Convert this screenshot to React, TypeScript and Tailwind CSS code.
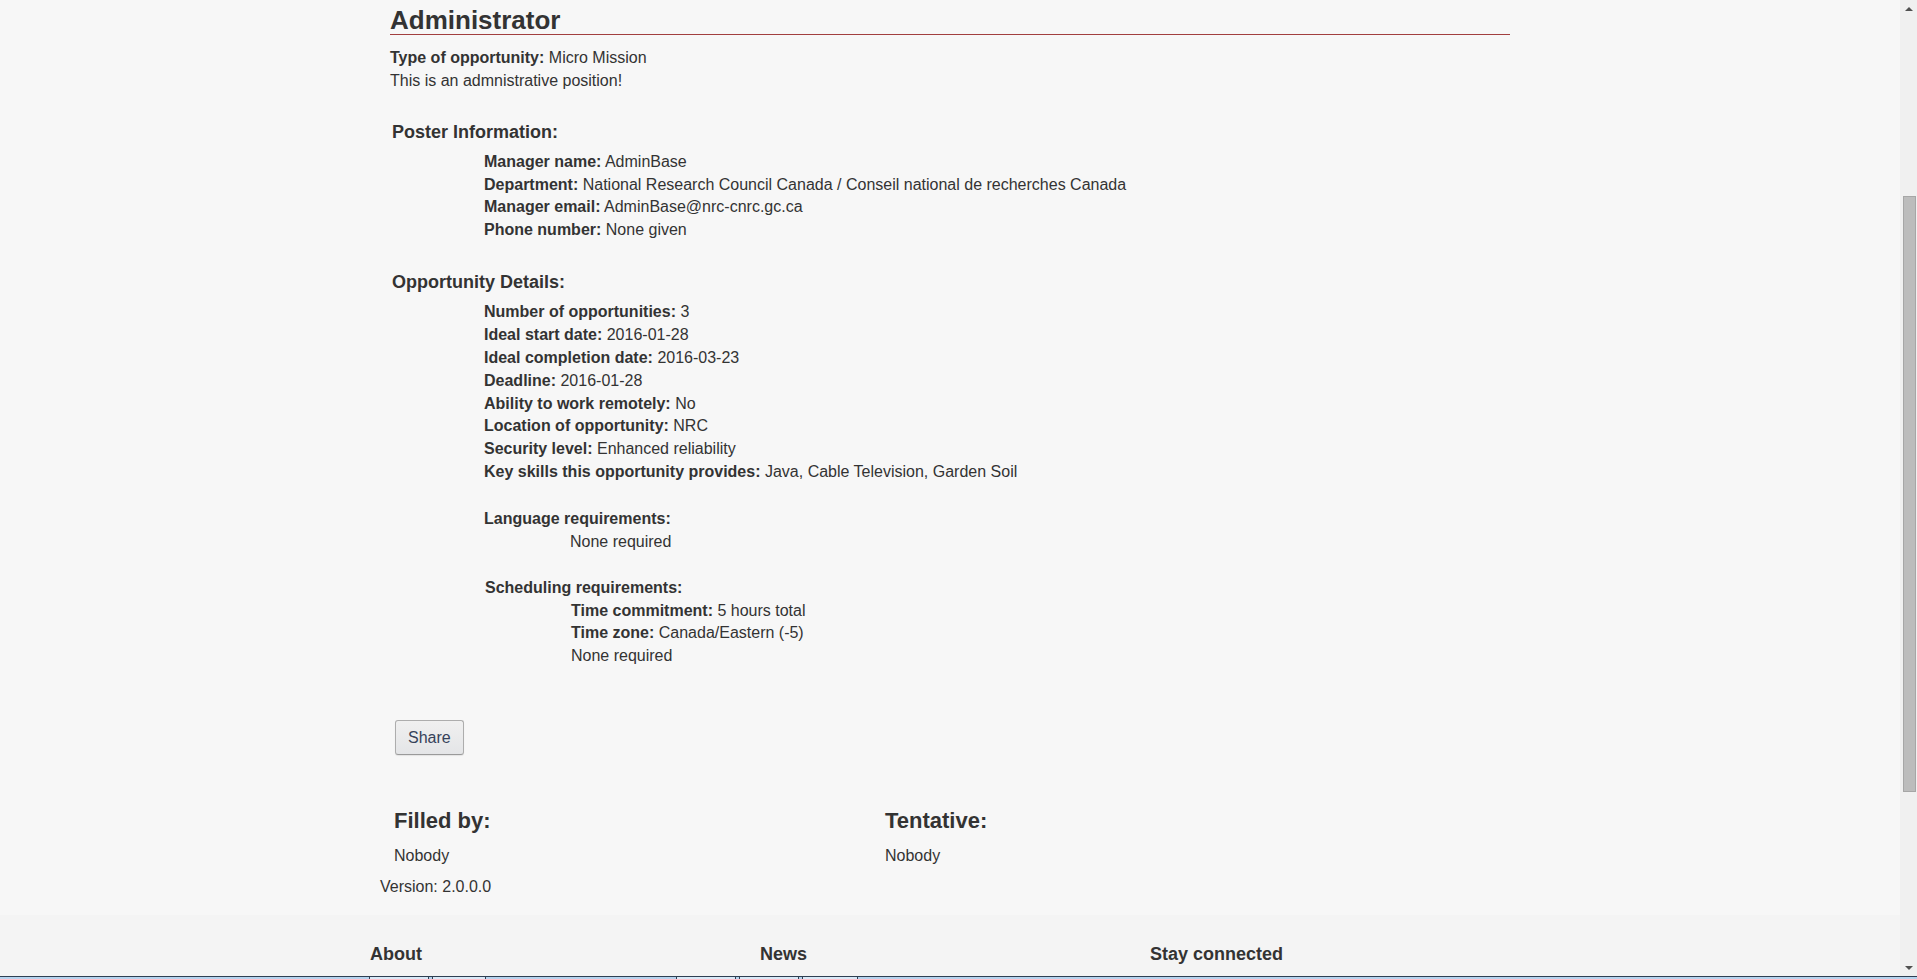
import React from "react";

const posterInfo = [
  { label: "Manager name:", value: "AdminBase" },
  {
    label: "Department:",
    value: "National Research Council Canada / Conseil national de recherches Canada",
  },
  { label: "Manager email:", value: "AdminBase@nrc-cnrc.gc.ca" },
  { label: "Phone number:", value: "None given" },
];

const opportunityDetails = [
  { label: "Number of opportunities:", value: "3" },
  { label: "Ideal start date:", value: "2016-01-28" },
  { label: "Ideal completion date:", value: "2016-03-23" },
  { label: "Deadline:", value: "2016-01-28" },
  { label: "Ability to work remotely:", value: "No" },
  { label: "Location of opportunity:", value: "NRC" },
  { label: "Security level:", value: "Enhanced reliability" },
  {
    label: "Key skills this opportunity provides:",
    value: "Java, Cable Television, Garden Soil",
  },
];

function Row({ label, value }: { label: string; value: string }) {
  return (
    <div className="leading-[22.86px]">
      <b>{label}</b> {value}
    </div>
  );
}

function Scrollbar() {
  return (
    <div className="flex w-[17px] shrink-0 flex-col bg-[#f0f0f0]">
      <div className="flex h-[17px] items-center justify-center">
        <div className="h-0 w-0 border-x-[4px] border-b-[4px] border-x-transparent border-b-[#505050]" />
      </div>
      <div className="flex-1 pt-[179px]">
        <div className="ml-[3px] h-[596px] w-[13px] border border-[#a6a6a6] bg-[#bcbcbc]" />
      </div>
      <div className="flex h-[17px] items-center justify-center">
        <div className="h-0 w-0 border-x-[4px] border-t-[4px] border-x-transparent border-t-[#505050]" />
      </div>
    </div>
  );
}

export default function App() {
  return (
    <div
      className="flex h-[979px] flex-col overflow-hidden bg-[#f7f7f7] text-[16px] text-[#333]"
      style={{ fontFamily: '"Liberation Sans", Arial, sans-serif' }}
    >
      <div className="flex min-h-0 flex-1">
        <div className="min-w-0 flex-1 overflow-hidden">
          <div className="mx-auto w-[1170px] px-[15px] pb-[16px] pt-[1px]">
            <div className="px-[10px]">
              <h2 className="mt-[5px] border-b border-[#a23f3f] text-[26px] font-bold leading-[28px]">
                Administrator
              </h2>
              <div className="mt-[12px]">
                <Row label="Type of opportunity:" value="Micro Mission" />
                <div className="leading-[22.86px]">
                  This is an admnistrative position!
                </div>
              </div>

              <h3 className="mt-[29px] pl-[2px] text-[18px] font-bold leading-[20px]">
                Poster Information:
              </h3>
              <div className="mt-[9px] pl-[94px]">
                {posterInfo.map((item) => (
                  <Row key={item.label} label={item.label} value={item.value} />
                ))}
              </div>

              <h3 className="mt-[30px] pl-[2px] text-[18px] font-bold leading-[20px]">
                Opportunity Details:
              </h3>
              <div className="mt-[9px] pl-[94px]">
                {opportunityDetails.map((item) => (
                  <Row key={item.label} label={item.label} value={item.value} />
                ))}
                <div className="mt-[24px] font-bold leading-[22.86px]">
                  Language requirements:
                </div>
                <div className="pl-[86px] leading-[22.86px]">None required</div>
                <div className="mt-[23px] pl-[1px] font-bold leading-[22.86px]">
                  Scheduling requirements:
                </div>
                <div className="pl-[87px]">
                  <Row label="Time commitment:" value="5 hours total" />
                  <Row label="Time zone:" value="Canada/Eastern (-5)" />
                  <div className="leading-[22.86px]">None required</div>
                </div>
              </div>

              <button className="ml-[5px] mt-[52px] flex h-[35px] items-center rounded-[3px] border border-[#adadad] border-b-[#9a9a9a] bg-gradient-to-b from-[#f0f0f0] to-[#e4e5e7] px-[12px] text-[16px] text-[#36425a] shadow-[0_1px_1px_rgba(0,0,0,0.08)]">
                Share
              </button>

              <div className="mt-[54px] flex pl-[4px]">
                <div className="w-[491px]">
                  <h3 className="text-[22px] font-bold leading-[24px]">Filled by:</h3>
                  <div className="mt-[12px] leading-[22.86px]">Nobody</div>
                </div>
                <div>
                  <h3 className="text-[22px] font-bold leading-[24px]">Tentative:</h3>
                  <div className="mt-[12px] leading-[22.86px]">Nobody</div>
                </div>
              </div>
            </div>
            <div className="mt-[8px] leading-[22.86px]">Version: 2.0.0.0</div>
          </div>

          <div className="h-full bg-[#f4f4f4]">
            <div className="mx-auto grid w-[1170px] grid-cols-3 pt-[29px]">
              <h4 className="pl-[5px] text-[18px] font-bold leading-[20px]">About</h4>
              <h4 className="pl-[5px] text-[18px] font-bold leading-[20px]">News</h4>
              <h4 className="pl-[5px] text-[18px] font-bold leading-[20px]">
                Stay connected
              </h4>
            </div>
          </div>
        </div>
        <Scrollbar />
      </div>

      <div className="flex h-[3px] shrink-0 border-t border-[#2f3f52] bg-[#b6d3ee]">
        <div className="ml-[369px] w-[60px] border-x border-[#2f3f52] bg-[#d9e9f7]" />
        <div className="ml-[3px] w-[54px] border-x border-[#2f3f52] bg-[#d9e9f7]" />
        <div className="ml-[190px] w-[60px] border-x border-[#2f3f52] bg-[#d9e9f7]" />
        <div className="ml-[3px] w-[60px] border-x border-[#2f3f52] bg-[#d9e9f7]" />
        <div className="ml-[3px] w-[56px] border-x border-[#2f3f52] bg-[#d9e9f7]" />
      </div>
    </div>
  );
}
